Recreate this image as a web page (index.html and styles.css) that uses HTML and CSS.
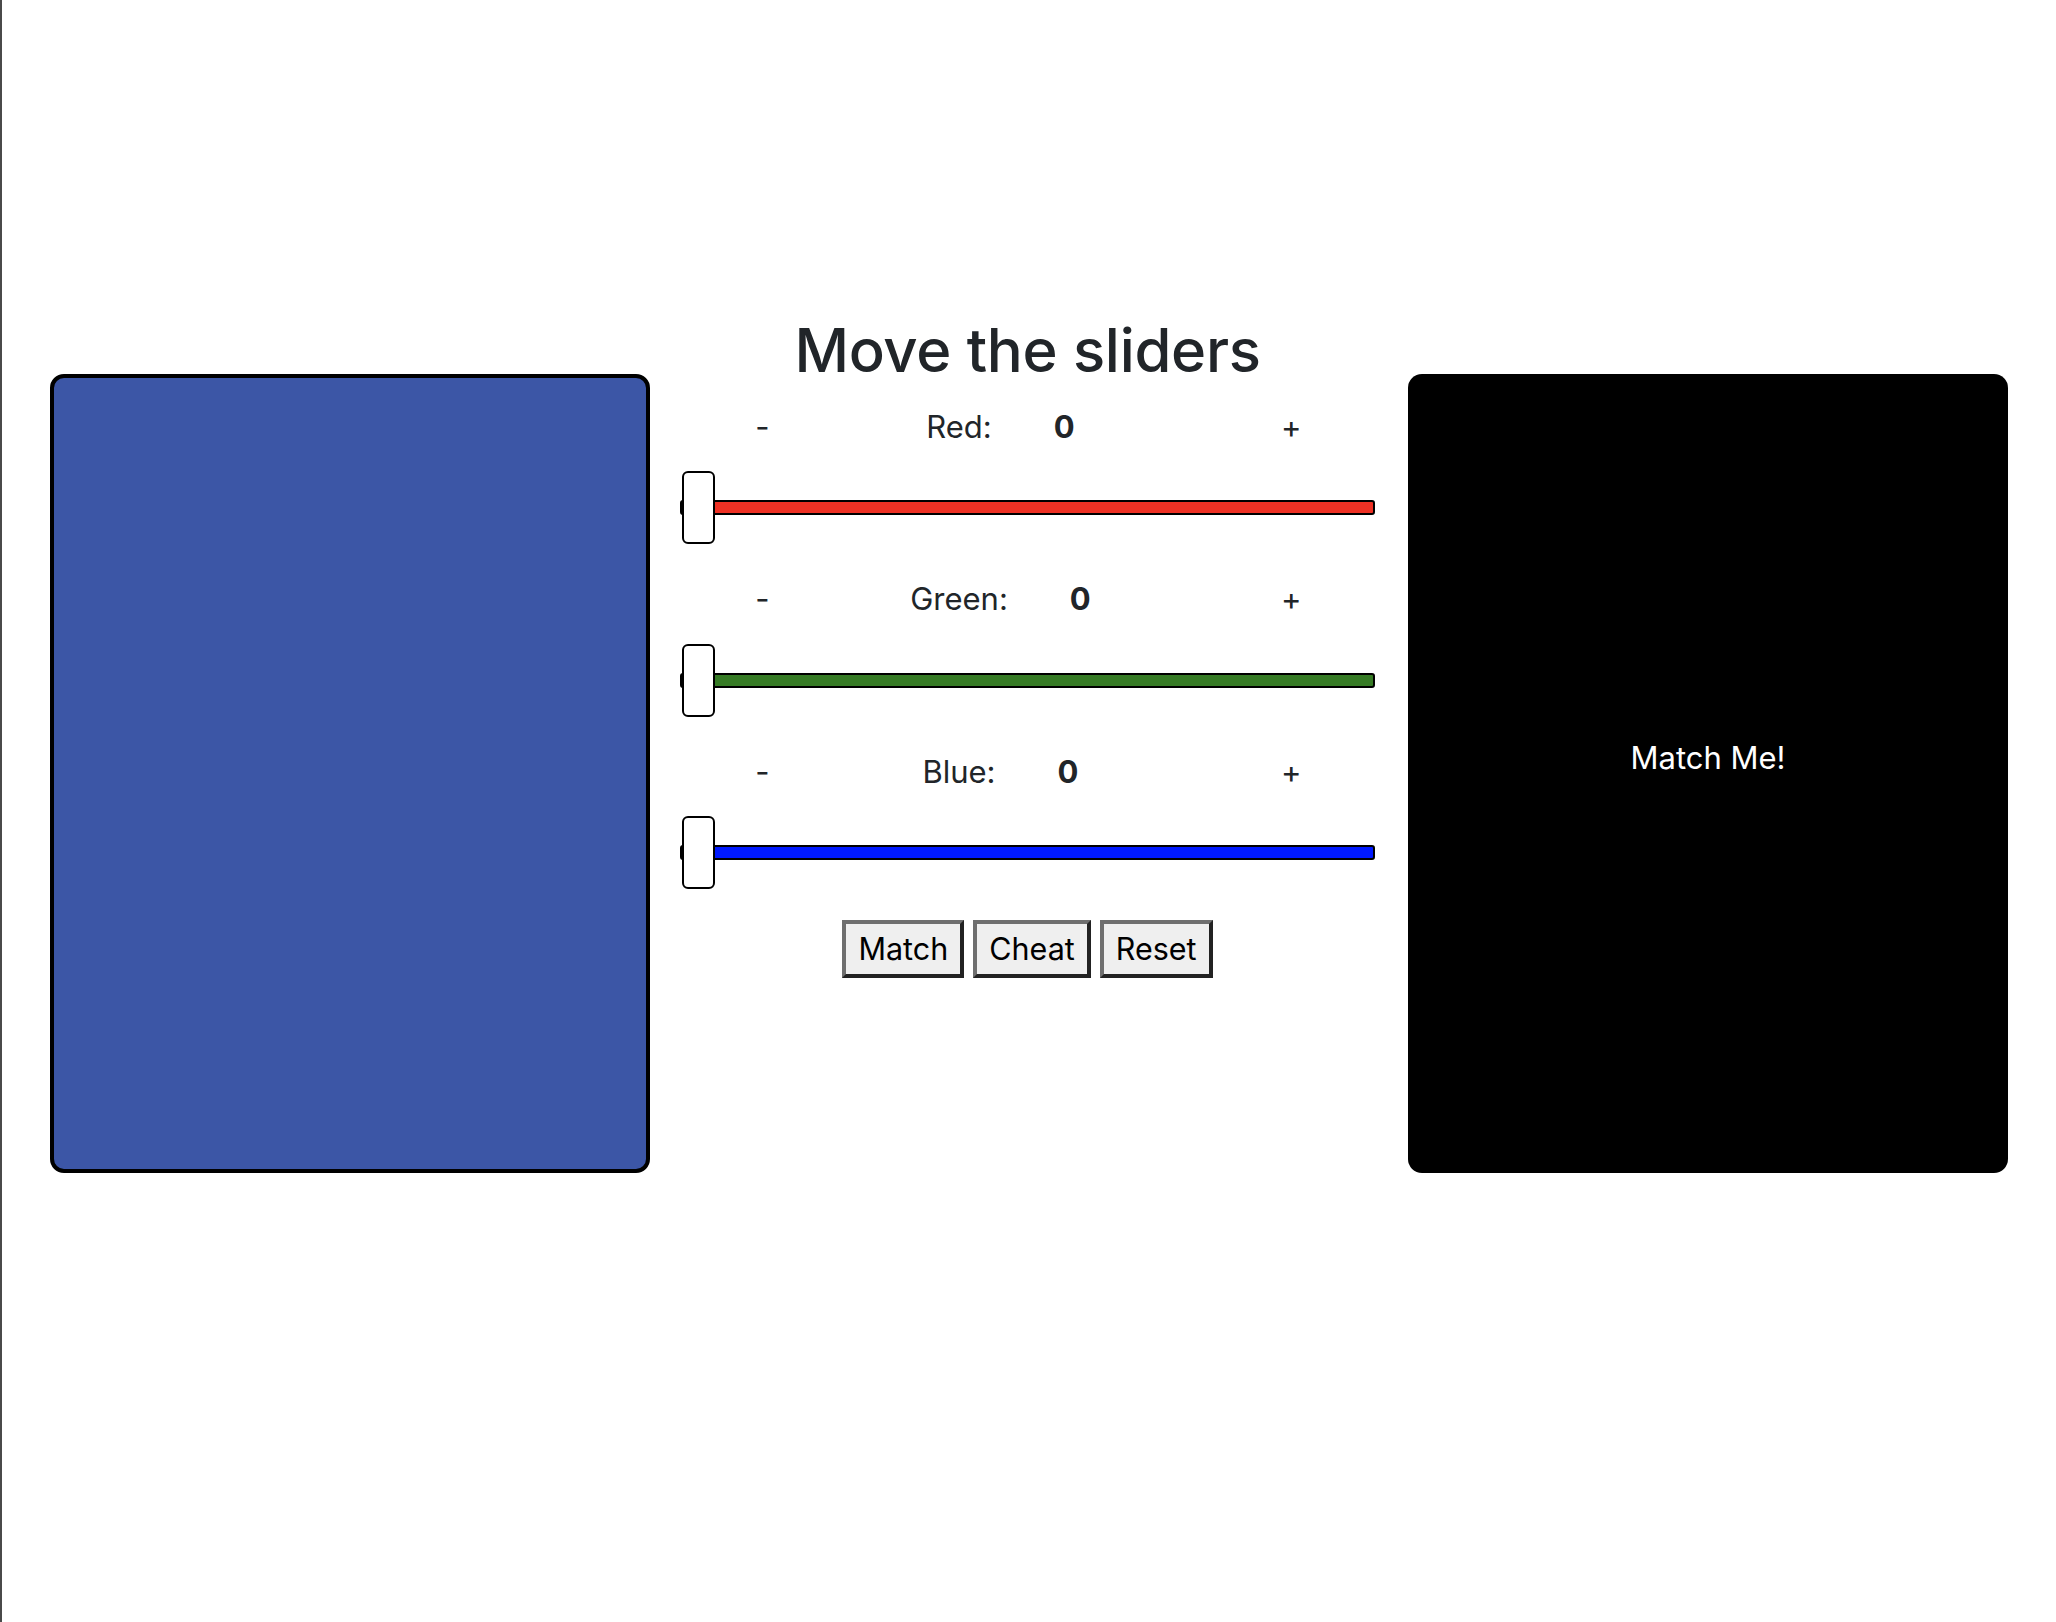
FILE: index.html
```html
<!DOCTYPE html>
<html lang="en">
<head>
<meta charset="utf-8">
<title>Color Match</title>
<link rel="stylesheet" href="styles.css">
</head>
<body>
<div class="frame">
  <main class="page">
    <section class="panel panel-guess"></section>

    <section class="controls">
      <h1 class="title">Move the sliders</h1>

      <div class="ctl">
        <div class="ctl-head">
          <span class="step">-</span>
          <span class="name"><span class="label">Red:</span><span class="value">0</span></span>
          <span class="step step-plus">+</span>
        </div>
        <div class="slider">
          <div class="track track-red"></div>
          <div class="thumb"></div>
        </div>
      </div>

      <div class="ctl">
        <div class="ctl-head">
          <span class="step">-</span>
          <span class="name"><span class="label">Green:</span><span class="value">0</span></span>
          <span class="step step-plus">+</span>
        </div>
        <div class="slider">
          <div class="track track-green"></div>
          <div class="thumb"></div>
        </div>
      </div>

      <div class="ctl">
        <div class="ctl-head">
          <span class="step">-</span>
          <span class="name"><span class="label">Blue:</span><span class="value">0</span></span>
          <span class="step step-plus">+</span>
        </div>
        <div class="slider">
          <div class="track track-blue"></div>
          <div class="thumb"></div>
        </div>
      </div>

      <div class="actions">
        <button class="btn" type="button">Match</button>
        <button class="btn" type="button">Cheat</button>
        <button class="btn" type="button">Reset</button>
      </div>
    </section>

    <section class="panel panel-target">
      <p class="target-text">Match Me!</p>
    </section>
  </main>
</div>
</body>
</html>
```

FILE: styles.css
```css
html, body {
  margin: 0;
  padding: 0;
  background: #ffffff;
}

body {
  font-family: Inter, "Noto Sans", "Liberation Sans", sans-serif;
  color: #212529;
}

.frame {
  min-height: 1622px;
  border-left: 2px solid #4a4a4a;
  box-sizing: border-box;
}

.page {
  display: flex;
  align-items: flex-start;
  padding: 313px 48px 0 48px;
}

.panel {
  box-sizing: border-box;
  width: 600px;
  height: 799px;
  margin-top: 61px;
  flex: none;
}

.panel-guess {
  background: #3c56a6;
  border: 4px solid #000000;
  border-radius: 14px;
}

.panel-target {
  background: #000000;
  border-radius: 14px;
  display: flex;
  align-items: center;
  justify-content: center;
}

.target-text {
  margin: 0 0 32px 0;
  color: #ffffff;
  font-size: 31px;
  line-height: 40px;
}

.controls {
  flex: 1;
  padding: 0 33px 0 30px;
}

.title {
  margin: 0;
  text-align: center;
  font-size: 59.8px;
  line-height: 74px;
  font-weight: 500;
  letter-spacing: -0.3px;
  color: #212529;
}

.ctl {
  margin-top: 35px;
}

.ctl:first-of-type {
  margin-top: 19.5px;
}

.ctl-head {
  display: grid;
  grid-template-columns: 165px 290px 1fr;
  font-size: 31px;
  line-height: 40px;
}

.step {
  text-align: center;
}

.step-plus {
  text-align: left;
  padding-left: 146px;
}

.name {
  text-align: center;
  white-space: nowrap;
}

.label {
  font-weight: 400;
}

.value {
  display: inline-block;
  width: 0;
  margin-left: 62px;
  font-weight: 700;
  white-space: nowrap;
}

.slider {
  position: relative;
  height: 73px;
  margin-top: 24.5px;
}

.track {
  box-sizing: border-box;
  height: 15px;
  position: relative;
  top: 29px;
  border: 2px solid #000000;
  border-radius: 3px;
}

.track-red { background: #ee3124; }
.track-green { background: #367b25; }
.track-blue { background: #0019ff; }

.thumb {
  position: absolute;
  left: 2px;
  top: 0;
  box-sizing: border-box;
  width: 33px;
  height: 73px;
  background: #ffffff;
  border: 2px solid #000000;
  border-radius: 6px;
}

.actions {
  display: flex;
  justify-content: center;
  gap: 9px;
  margin-top: 31px;
}

.btn {
  font-family: Inter, "Noto Sans", "Liberation Sans", sans-serif;
  font-size: 30.5px;
  line-height: 38px;
  color: #000000;
  background: #efefef;
  padding: 6px 12px;
  border-style: solid;
  border-width: 4px;
  border-color: #6f6f6f #222222 #222222 #6f6f6f;
  border-radius: 0;
  margin: 0;
}
```
